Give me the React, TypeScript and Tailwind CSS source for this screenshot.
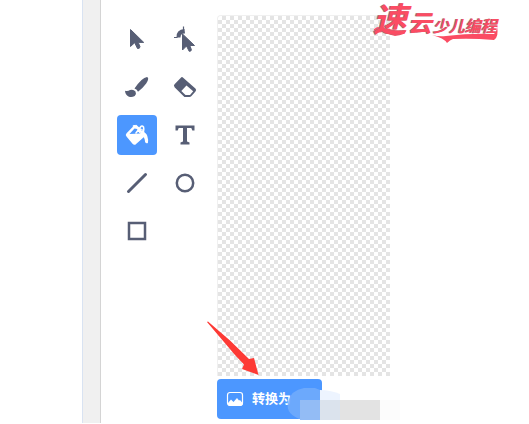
import React from "react";

const ink = "#575e75";

type Tool = { name: string; active?: boolean; icon: React.ReactNode };

const tools: Tool[] = [
  {
    name: "Select",
    icon: <path d="M13.500 10.500v17l4.200-3.800 2.800 5.800q2.300.3 2.500-1.800l-1.700-4.300h5.400z" fill={ink} stroke={ink} strokeLinejoin="round" />,
  },
  {
    name: "Reshape",
    icon: (
      <>
        <path d="M9 18.500h3.500M18.500 11V7.500" fill="none" stroke={ink} strokeWidth="1.200" />
        <path d="M11.500 18.500q-.5-8 8-8.500l.5 4.500q-4.500-.5-4.500 4z" fill={ink} />
        <path d="M17.500 15v16l4-4 2.700 5.300q2 .3 2.200-1.600l-1.600-4.200h4.700z" fill={ink} stroke={ink} strokeLinejoin="round" />
      </>
    ),
  },
  {
    name: "Brush",
    icon: (
      <>
        <path d="M17.500 21.500q7.500-11 12.500-11.500 2.800.8-.8 6.500-3.500 4.800-8.200 8.200-.8-2.500-3.500-3.200z" fill={ink} />
        <path d="M8 23.800q3 .8 5-.8 3.500-1 5.500 1.500 1.300 2.500-.8 4.500-3 1.800-6.200.5-3.200-1.500-3.500-5.700z" fill={ink} />
      </>
    ),
  },
  {
    name: "Eraser",
    icon: (
      <>
        <path d="M17 11l12.800 11.200q.8.800 0 1.600l-4 4.700q-.6.700-1.500.7h-4.500L10.200 19.500q-.7-.8 0-1.500z" fill={ink} stroke={ink} strokeWidth="1.800" strokeLinejoin="round" />
        <path d="M21.500 18.500l6.700 5.700-3.200 3.800h-4.500l-4.200-4z" fill="#fff" />
      </>
    ),
  },
  {
    name: "Fill",
    active: true,
    icon: (
      <>
        <path d="M17.500 11.500l-7.300 7.300q-1 1 0 2.200l6 7.200q1 1 2.300.2l9-8-2-5z" fill="#fff" stroke="#fff" strokeWidth="1.800" strokeLinejoin="round" />
        <path d="M17.500 13.500L12.500 19l10.500-.5 2.500-3.500z" fill="#4c97ff" />
        <path d="M16.500 11q4-1 9.500 8M19 18l4.500-6q1.500-2 3 0 .8 2-.2 6M19 10.500l2 2M21 14.500l2 3" fill="none" stroke="#fff" strokeWidth="1.600" strokeLinecap="round" />
        <path d="M25 16.500q4.500 1 5.300 4.500 1.200 3.500.6 7-1.900 1-2.800-1-.3-5-3.600-7z" fill="#fff" />
      </>
    ),
  },
  {
    name: "Text",
    icon: <path d="M10.500 10.500h19v5h-2.200l-1-2.500H22v13.500l2.500 1v2h-9v-2l2.500-1V13h-4.300l-1 2.500h-2.200z" fill={ink} />,
  },
  { name: "Line", icon: <path d="M11.500 28.500l17-17" stroke={ink} strokeWidth="3" strokeLinecap="round" /> },
  { name: "Circle", icon: <circle cx="20" cy="20" r="8.200" fill="none" stroke={ink} strokeWidth="2.500" /> },
  { name: "Rectangle", icon: <rect x="12" y="12" width="16" height="16" fill="none" stroke={ink} strokeWidth="2.500" /> },
];

export default function App() {
  return (
    <main className="relative flex h-screen overflow-hidden bg-white font-['Liberation_Sans','Noto_Sans_CJK_SC',sans-serif]">
      <aside className="w-[82px] shrink-0" />
      <div className="mb-px w-[19px] shrink-0 border-l border-r border-l-[#d9e3f2] border-r-[#d4d4d4] bg-[#f0f0f0]" />

      <nav aria-label="Paint tools" className="ml-4 mt-[19px] grid shrink-0 grid-cols-2 content-start gap-2">
        {tools.map((tool) => (
          <button
            key={tool.name}
            type="button"
            aria-label={tool.name}
            className={tool.active ? "size-10 rounded bg-[#4c97ff]" : "size-10 rounded"}
          >
            <svg viewBox="0 0 40 40" className="size-10">{tool.icon}</svg>
          </button>
        ))}
      </nav>

      <section className="ml-3 flex min-w-0 flex-1 flex-col items-start pt-[15px] pb-[5px]">
        <div className="mb-[3px] w-[173px] flex-1 rounded-tl border-l border-t border-[#f0f0f0] bg-[conic-gradient(#e4e4e4_25%,#fff_0_50%,#e4e4e4_0_75%,#fff_0)] bg-[length:8px_8px]" />
        <button
          type="button"
          className="flex h-10 w-[105px] shrink-0 items-center gap-2 rounded bg-[#4c97ff] pl-[9px] text-[13px] font-bold whitespace-nowrap text-white"
        >
          <svg viewBox="0 0 18 16" className="h-4 w-[18px] shrink-0">
            <rect x="1.500" y="1.500" width="15" height="13" rx="2.500" fill="none" stroke="#fff" strokeWidth="1.200" />
            <path d="M2 14v-2l3-3.500 2.500 2.500 3.500-4 2 2.500 1-.5 2.500 3v2z" fill="#fff" />
          </svg>
          <span>转换为</span>
        </button>
      </section>

      <div className="absolute top-0 left-[373px]">
        <svg viewBox="0 0 126 44" className="absolute top-0 left-0 h-11 w-[126px]">
          <path d="M59 35q7 2 14 1 25-3 48-2 3-3 3-8 2 11-3 14-22-2-41-1-3 1-6 4-3-5-15-8z" fill="#fb4c63" />
          <path d="M1 29q5-4 12-1 9 3 20 3-1 4-11 5-8-2-12-4-4 0-8 2-2-2-1-5z" fill="#fb4c63" />
        </svg>
        <h1 className="relative flex items-baseline gap-px font-bold whitespace-nowrap text-[#fb4c63] italic [text-shadow:-1px_0_0_#8b7b80]">
          <span className="text-[34px] leading-10">速</span>
          <span className="text-2xl">云</span>
          <span className="text-base">少儿编程</span>
        </h1>
      </div>

      <svg viewBox="0 0 54 56" className="absolute top-[321px] left-[207px] h-14 w-[54px]">
        <path d="M0 1l1-.5L23 19.500 42 38l5-1 4.500 17L35 48l2-4.500L28 34z" fill="#fd3a35" />
      </svg>
      <svg viewBox="0 0 120 40" className="absolute top-[385px] left-[285px] h-10 w-[120px]">
        <path d="M35 5q10 0 20 4v6H35z" fill="#edf4ff" />
        <path d="M3 17Q6 5 19 3h11l5 2v30H18Q0 30 3 17z" fill="#72abfc" fillOpacity=".85" />
        <path d="M15 15h20v20H15z" fill="#93bcf5" />
        <path d="M35 15h20v20H35z" fill="#dbe3ed" />
        <path d="M55 15h40v20H55z" fill="#e3e3e3" />
        <path d="M95 15h20v20H95z" fill="#fcfcfc" />
      </svg>
    </main>
  );
}
